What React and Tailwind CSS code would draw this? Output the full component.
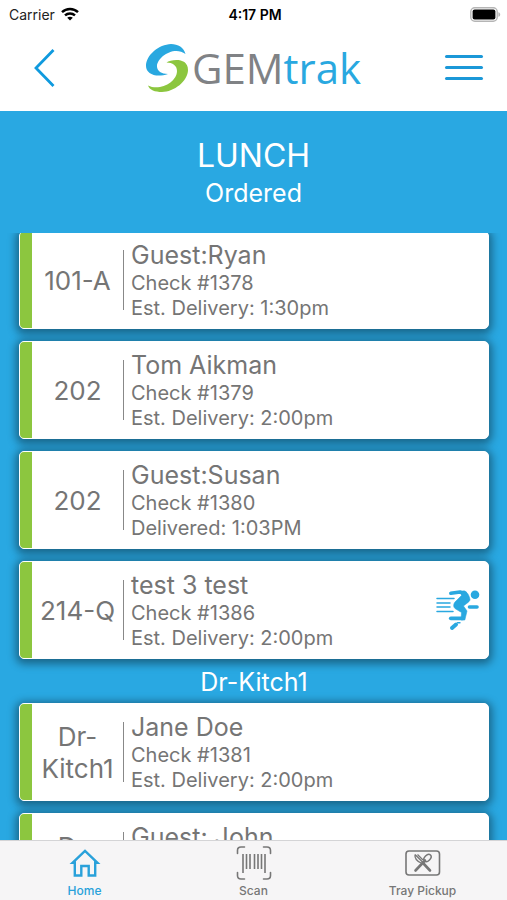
import React from 'react';

const orders = [
    { id: 1378, room: '101-A', name: 'Guest:Ryan', status: 'Est. Delivery: 1:30pm' },
    { id: 1379, room: '202', name: 'Tom Aikman', status: 'Est. Delivery: 2:00pm' },
    { id: 1380, room: '202', name: 'Guest:Susan', status: 'Delivered: 1:03PM' },
    { id: 1386, room: '214-Q', name: 'test 3 test', status: 'Est. Delivery: 2:00pm', running: true },
];

const kitchenOrders = [
    { id: 1381, room: 'Dr-Kitch1', name: 'Jane Doe', status: 'Est. Delivery: 2:00pm' },
    { id: 1382, room: 'Dr-Kitch1', name: 'Guest: John', status: 'Est. Delivery: 2:00pm' },
];

const WifiIcon = () => (
    <svg width="18" height="14" viewBox="0 0 18 14" fill="none" stroke="#000" strokeWidth="2.4" aria-hidden="true">
        <path d="M1 5.2C5.4 0.9 12.6 0.9 17 5.2" />
        <path d="M4 8.4C6.8 5.8 11.2 5.8 14 8.4" />
        <path d="M9 13.6L6.2 10.8C7.8 9.4 10.2 9.4 11.8 10.8Z" fill="#000" stroke="none" />
    </svg>
);

const BatteryIcon = () => (
    <svg width="31" height="15" viewBox="0 0 31 15" aria-hidden="true">
        <rect x="0.8" y="0.8" width="26.4" height="13.4" rx="4" fill="#fff" stroke="#b5b5b5" strokeWidth="1.4" />
        <rect x="2.6" y="2.6" width="22.8" height="9.8" rx="2" fill="#000" />
        <path d="M28.4 5.2C30.8 5.8 30.8 9.2 28.4 9.8Z" fill="#b5b5b5" />
    </svg>
);

const LogoMark = () => (
    <svg width="44" height="50" viewBox="0 0 44 50" aria-hidden="true">
        <path d="M39.500 11C38 4.500 32 1 25 1C13 1.500 0 12 0 23C0 31 10 35 22 31C15.500 31 11 28 11 23.500C11 14 28 2.500 39.500 11Z" fill="#29a8e0" />
        <path d="M20.500 19.500C25 16.500 42 14 42 27C42 38 28 49 16 49C9 49 3.500 47 2 42.500C14 48.500 31 39 31 28C31 22.500 26.500 19.500 20.500 19.500Z" fill="#8cc63f" />
    </svg>
);

const RunnerIcon = () => (
    <svg width="44" height="42" viewBox="0 0 44 42" fill="none" stroke="#29a8e0" strokeLinecap="round" strokeLinejoin="round" role="img" aria-label="Out for delivery">
        <circle cx="39" cy="5.800" r="4.300" fill="#29a8e0" stroke="none" />
        <path d="M14.800 4.300L24 3L29 4.500" strokeWidth="3.600" />
        <path d="M24 3L28 1.800C31 2.500 33 6 34 10.500C34 12.500 31 14 27.500 17L31 22L28.800 31H25L25.500 23.500L19 19.500C17 17.500 17.500 15 19 13L25.500 6.500Z" fill="#29a8e0" strokeWidth="0.600" />
        <path d="M27 29.300L14.800 29.300" strokeWidth="3.800" />
        <path d="M33.500 18L41 18" strokeWidth="3.600" />
        <path d="M16 39L20 35.500" strokeWidth="4" />
        <path d="M21.500 33.800L24 33.800" strokeWidth="1.400" />
        <path d="M1 9.500H18M1 14H14M1 18H14M1 22.500H17" strokeWidth="1.500" />
    </svg>
);

const HomeIcon = () => (
    <svg width="32" height="34" viewBox="0 0 32 34" fill="none" stroke="#29a1da" strokeWidth="2.4" aria-hidden="true">
        <path d="M3.500 16.800L16 4.800L28.500 16.800H26.200V29.500H19.700V20H12.300V29.500H5.800V16.800Z" />
    </svg>
);

const ScanIcon = () => (
    <svg width="36" height="34" viewBox="0 0 36 34" fill="none" stroke="#777" strokeWidth="1.600" strokeLinecap="round" aria-hidden="true">
        <path d="M8.500 1H5Q1.500 1 1.500 4.500V7.500M27.500 1H31Q34.500 1 34.500 4.500V7.500M8.500 33H5Q1.500 33 1.500 29.500V26.500M27.500 33H31Q34.500 33 34.500 29.500V26.500" />
        <path d="M7 8V27M10.500 8V23M14 8V23M18.500 8V23M22 8V23M25.500 8V23M29 8V27" strokeLinecap="butt" />
    </svg>
);

const TrayIcon = () => (
    <svg width="36" height="34" viewBox="0 0 36 34" fill="none" stroke="#777" aria-hidden="true">
        <rect x="1" y="5" width="33.500" height="24" rx="3" strokeWidth="1.600" />
        <ellipse cx="22.500" cy="12" rx="2.800" ry="4.200" transform="rotate(45 22.500 12)" strokeWidth="1.500" />
        <path d="M20 14.500L10.500 24.500" strokeWidth="2.600" strokeLinecap="round" />
        <path d="M18 17L25 24.500" strokeWidth="2.600" strokeLinecap="round" />
        <path d="M10 8.500L18.500 17M10 8.500C9.500 12 12 15 16 17M12.500 8.500L18 14" strokeWidth="1.300" />
    </svg>
);

const OrderCard = ({ order }) => (
    <li className="flex h-[98px] shrink-0 items-stretch overflow-hidden rounded-[5px] border border-white bg-white text-[#757575] shadow-[0_2px_8px_3px_rgba(0,0,0,0.4)]">
        <div className="w-3 shrink-0 bg-[#8cc63f]" />
        <p className="flex w-[91px] shrink-0 items-center justify-center pt-0.5 text-center text-[26px] leading-8">{order.room}</p>
        <div className="my-[18px] w-px shrink-0 bg-[#888]" />
        <div className="min-w-0 grow pt-[7px] pl-[7px]">
            <h3 className="text-[25px] leading-8">{order.name}</h3>
            <p className="text-[20px] leading-[25px]">Check #{order.id}</p>
            <p className="text-[20px] leading-[25px]">{order.status}</p>
        </div>
        {order.running && (
            <div className="flex shrink-0 items-center pr-2">
                <RunnerIcon />
            </div>
        )}
    </li>
);

const Tab = ({ label, icon, active }) => (
    <a href="#" aria-current={active ? 'page' : undefined} className={`flex flex-1 flex-col items-center pt-[5px] text-[12px] leading-[14px] font-medium ${active ? 'text-[#29a1da]' : 'text-[#777]'}`}>
        <span className="mb-1">{icon}</span>
        {label}
    </a>
);

const App = () => {
    return (
        <div className="flex h-screen flex-col bg-[#29a8e2] font-['Inter','Liberation_Sans',sans-serif]">
            <header className="shrink-0 bg-white">
                <div className="grid h-7 grid-cols-3 items-center pr-1.5 pl-[9px] text-[14px] text-black">
                    <div className="flex items-center gap-1.5">
                        <span className="text-[#222]">Carrier</span>
                        <WifiIcon />
                    </div>
                    <p className="text-center font-semibold">4:17 PM</p>
                    <div className="flex justify-end">
                        <BatteryIcon />
                    </div>
                </div>
                <div className="flex h-[83px] items-center justify-between px-6 pb-1">
                    <button aria-label="Back" className="w-[38px] pl-2.5">
                        <svg width="22" height="40" viewBox="0 0 22 40" fill="none" stroke="#0f9ade" strokeWidth="2.800">
                            <path d="M19.500 2L2 20L19.500 38" />
                        </svg>
                    </button>
                    <div className="flex items-center gap-0.5">
                        <LogoMark />
                        <h1 className="font-['Open_Sans','Noto_Sans',sans-serif] text-[42px] leading-[50px] text-[#808285]">
                            GEM<span className="text-[#29a8e0]">trak</span>
                        </h1>
                    </div>
                    <button aria-label="Menu" className="flex w-[38px] flex-col gap-2">
                        <span className="h-[3px] rounded-full bg-[#1b98d8]" />
                        <span className="h-[3px] rounded-full bg-[#1b98d8]" />
                        <span className="h-[3px] rounded-full bg-[#1b98d8]" />
                    </button>
                </div>
            </header>

            <div className="shrink-0 pt-6 pb-6 text-center text-white">
                <h2 className="text-[32px] leading-[42px]">LUNCH</h2>
                <p className="text-[25px] leading-8">Ordered</p>
            </div>

            <main className="min-h-0 grow overflow-hidden pr-[18px] pl-[19px]">
                <ul className="-mt-0.5 flex flex-col gap-3">
                    {orders.map((order) => (
                        <OrderCard key={order.id} order={order} />
                    ))}
                </ul>
                <h2 className="flex h-11 items-center justify-center pt-0.5 text-[25px] leading-8 text-white">Dr-Kitch1</h2>
                <ul className="flex flex-col gap-3">
                    {kitchenOrders.map((order) => (
                        <OrderCard key={order.id} order={order} />
                    ))}
                </ul>
            </main>

            <nav className="flex h-[60px] shrink-0 border-t border-[#d4d4d6] bg-[#f6f5f6]">
                <Tab label="Home" icon={<HomeIcon />} active />
                <Tab label="Scan" icon={<ScanIcon />} />
                <Tab label="Tray Pickup" icon={<TrayIcon />} />
            </nav>
        </div>
    );
};

export default App;
